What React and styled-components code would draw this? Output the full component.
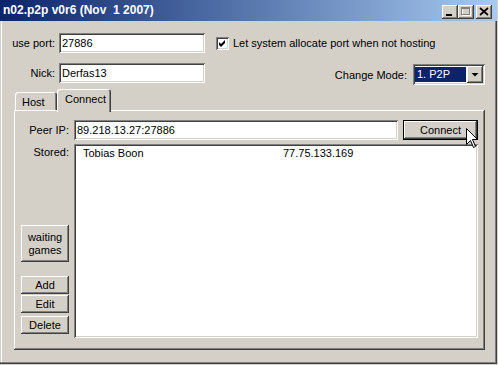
import styled, { createGlobalStyle } from "styled-components";

const GlobalStyle = createGlobalStyle`
  body {
    margin: 0;
    background: #d4d0c8;
    font-family: "Liberation Sans", Arial, sans-serif;
    font-size: 11px;
    color: #000;
  }
`;

const raised = `
  background: #d4d0c8;
  box-shadow: inset -1px -1px #404040, inset 1px 1px #fff,
    inset -2px -2px #808080, inset 2px 2px #d4d0c8;
`;

const sunken = `
  box-shadow: inset 1px 1px #808080, inset -1px -1px #fff,
    inset 2px 2px #404040, inset -2px -2px #d4d0c8;
`;

const Window = styled.div`
  width: 497px;
  height: 364px;
  display: flex;
  flex-direction: column;
  background: #d4d0c8;
  box-shadow: inset -1px -1px #404040, inset -2px -2px #808080,
    inset 1px 0 #d4d0c8, inset 2px 0 #fff;
`;

const TitleBar = styled.div`
  height: 21px;
  box-sizing: border-box;
  padding: 3px 5px 0 3px;
  display: flex;
  align-items: flex-start;
  background: linear-gradient(to right, #0a246a, #a6caf0);
  color: #fff;
  font-weight: bold;
  font-size: 12px;
  line-height: 14px;
  white-space: pre;
`;

const TitleButtons = styled.div`
  margin-left: auto;
  margin-top: 2px;
  display: flex;
`;

const TitleButton = styled.div`
  ${raised}
  width: 16px;
  height: 14px;
  margin-left: ${(p) => (p.$gap ? "2px" : "0")};
  svg {
    display: block;
  }
`;

const Body = styled.div`
  flex: 1;
  padding: 12px 12px 0 0;
  display: flex;
  flex-direction: column;
`;

const FormRow = styled.div`
  display: flex;
  align-items: ${(p) => p.$align || "center"};
  margin-top: ${(p) => p.$top || 0}px;
`;

const FieldLabel = styled.label`
  width: ${(p) => p.$w}px;
  margin-right: 4px;
  text-align: right;
  line-height: 20px;
`;

const TextInput = styled.input`
  width: ${(p) => (p.$w ? `${p.$w}px` : "auto")};
  flex: ${(p) => (p.$w ? "none" : 1)};
  min-width: 0;
  height: 20px;
  box-sizing: border-box;
  border: none;
  outline: none;
  padding: 0 3px;
  margin: 0;
  background: #fff;
  font: inherit;
  color: #000;
  ${sunken}
`;

const CheckWrap = styled.label`
  display: flex;
  align-items: center;
  margin-left: 11px;
  gap: 4px;
`;

const CheckBox = styled.span`
  width: 13px;
  height: 13px;
  background: #fff;
  ${sunken}
  svg {
    display: block;
  }
`;

const ModeGroup = styled.div`
  margin-left: auto;
  margin-top: 1px;
  display: flex;
  align-items: center;
  gap: 6px;
`;

const Select = styled.div`
  width: 72px;
  height: 21px;
  box-sizing: border-box;
  padding: 2px;
  display: flex;
  background: #fff;
  ${sunken}
`;

const SelectValue = styled.div`
  flex: 1;
  margin: 1px 1px 1px 0;
  padding-left: 2px;
  background: #0a246a;
  color: #fff;
  line-height: 15px;
`;

const DropButton = styled.div`
  ${raised}
  width: 16px;
  svg {
    display: block;
  }
`;

const TabArea = styled.div`
  margin: 4px 0 0 14px;
  display: flex;
  flex-direction: column;
`;

const TabStrip = styled.div`
  display: flex;
  align-items: flex-end;
  padding-left: 1px;
`;

const Tab = styled.div`
  position: relative;
  width: ${(p) => p.$w}px;
  height: ${(p) => (p.$active ? 23 : 18)}px;
  margin-bottom: ${(p) => (p.$active ? -2 : 0)}px;
  z-index: ${(p) => (p.$active ? 1 : 0)};
  box-sizing: border-box;
  padding: 4px 0 0 ${(p) => (p.$active ? 8 : 7)}px;
  line-height: 13px;
  background: #d4d0c8;
  border-radius: 3px 3px 0 0;
  box-shadow: inset 1px 1px #fff, inset -1px 0 #404040,
    inset -2px 0 #808080;
`;

const Panel = styled.div`
  height: 240px;
  box-sizing: border-box;
  padding: 10px 7px 12px 7px;
  display: grid;
  grid-template-columns: 48px 1fr;
  grid-template-rows: 20px 1fr;
  column-gap: 5px;
  row-gap: 4px;
  box-shadow: inset -1px -1px #404040, inset 1px 1px #fff,
    inset -2px -2px #808080;
`;

const SideLabel = styled.div`
  text-align: right;
  line-height: ${(p) => (p.$top ? "13px" : "20px")};
  padding-top: ${(p) => (p.$top ? 2 : 0)}px;
`;

const PeerRow = styled.div`
  display: flex;
  gap: 5px;
`;

const ButtonWrap = styled.div`
  position: relative;
`;

const Button = styled.button`
  width: ${(p) => p.$w || 48}px;
  height: ${(p) => p.$h || 18}px;
  margin: ${(p) => p.$mt || 0}px 0 0 0;
  padding: 0;
  border: none;
  font: inherit;
  color: #000;
  line-height: 13px;
  ${raised}
  ${(p) =>
    p.$default &&
    `box-shadow: inset 0 0 0 1px #000, inset -2px -2px #404040, inset 2px 2px #fff,
      inset -3px -3px #808080, inset 3px 3px #d4d0c8;`}
`;

const Cursor = styled.svg`
  position: absolute;
  left: 63px;
  top: 8px;
  pointer-events: none;
`;

const SideColumn = styled.div`
  display: flex;
  flex-direction: column;
  padding-bottom: 4px;
`;

const ListBox = styled.div`
  background: #fff;
  padding: 2px;
  ${sunken}
`;

const ListRow = styled.div`
  display: grid;
  grid-template-columns: 200px 1fr;
  padding-left: 7px;
  line-height: 14px;
`;

const stored = [{ name: "Tobias Boon", ip: "77.75.133.169" }];

const App = () => (
  <>
    <GlobalStyle />
    <Window>
      <TitleBar>
        <span>{"n02.p2p v0r6 (Nov  1 2007)"}</span>
        <TitleButtons>
          <TitleButton>
            <svg width="16" height="14">
              <rect x="4" y="9" width="6" height="2" fill="#000" />
            </svg>
          </TitleButton>
          <TitleButton>
            <svg width="16" height="14">
              <rect x="4.5" y="3.5" width="8" height="7" fill="none" stroke="#fff" />
              <rect x="3.5" y="2.5" width="8" height="7" fill="none" stroke="#808080" />
              <rect x="3" y="2" width="9" height="2" fill="#808080" />
            </svg>
          </TitleButton>
          <TitleButton $gap>
            <svg width="16" height="14">
              <path d="M4 3 L12 10 M12 3 L4 10" stroke="#000" strokeWidth="1.7" />
            </svg>
          </TitleButton>
        </TitleButtons>
      </TitleBar>
      <Body>
        <FormRow>
          <FieldLabel $w={55}>use port:</FieldLabel>
          <TextInput $w={146} defaultValue="27886" readOnly />
          <CheckWrap>
            <CheckBox>
              <svg width="13" height="13">
                <path d="M3 5 L5 7 L9 3 L9 6 L5 10 L3 8 Z" fill="#000" />
              </svg>
            </CheckBox>
            Let system allocate port when not hosting
          </CheckWrap>
        </FormRow>
        <FormRow $align="flex-start" $top={10}>
          <FieldLabel $w={55}>Nick:</FieldLabel>
          <TextInput $w={146} defaultValue="Derfas13" readOnly />
          <ModeGroup>
            <span>Change Mode:</span>
            <Select>
              <SelectValue>1. P2P</SelectValue>
              <DropButton>
                <svg width="16" height="17">
                  <path d="M4.5 7 L11.5 7 L8 10.5 Z" fill="#000" />
                </svg>
              </DropButton>
            </Select>
          </ModeGroup>
        </FormRow>
        <TabArea>
          <TabStrip>
            <Tab $w={42}>Host</Tab>
            <Tab $w={54} $active>
              Connect
            </Tab>
          </TabStrip>
          <Panel>
            <SideLabel>Peer IP:</SideLabel>
            <PeerRow>
              <TextInput defaultValue="89.218.13.27:27886" readOnly />
              <ButtonWrap>
                <Button $w={75} $h={20} $default>
                  Connect
                </Button>
                <Cursor width="13" height="21" viewBox="0 0 13 21">
                  <path
                    d="M0.5 0.5 L0.5 16.5 L4.5 12.5 L7.5 19.5 L9.5 18.5 L6.5 11.5 L11.5 11.5 Z"
                    fill="#fff"
                    stroke="#000"
                  />
                </Cursor>
              </ButtonWrap>
            </PeerRow>
            <SideColumn>
              <SideLabel $top>Stored:</SideLabel>
              <Button $h={37} style={{ marginTop: "auto" }}>
                waiting
                <br />
                games
              </Button>
              <Button $mt={14}>Add</Button>
              <Button $mt={1}>Edit</Button>
              <Button $mt={3}>Delete</Button>
            </SideColumn>
            <ListBox>
              {stored.map((s) => (
                <ListRow key={s.name}>
                  <span>{s.name}</span>
                  <span>{s.ip}</span>
                </ListRow>
              ))}
            </ListBox>
          </Panel>
        </TabArea>
      </Body>
    </Window>
  </>
);

export default App;
